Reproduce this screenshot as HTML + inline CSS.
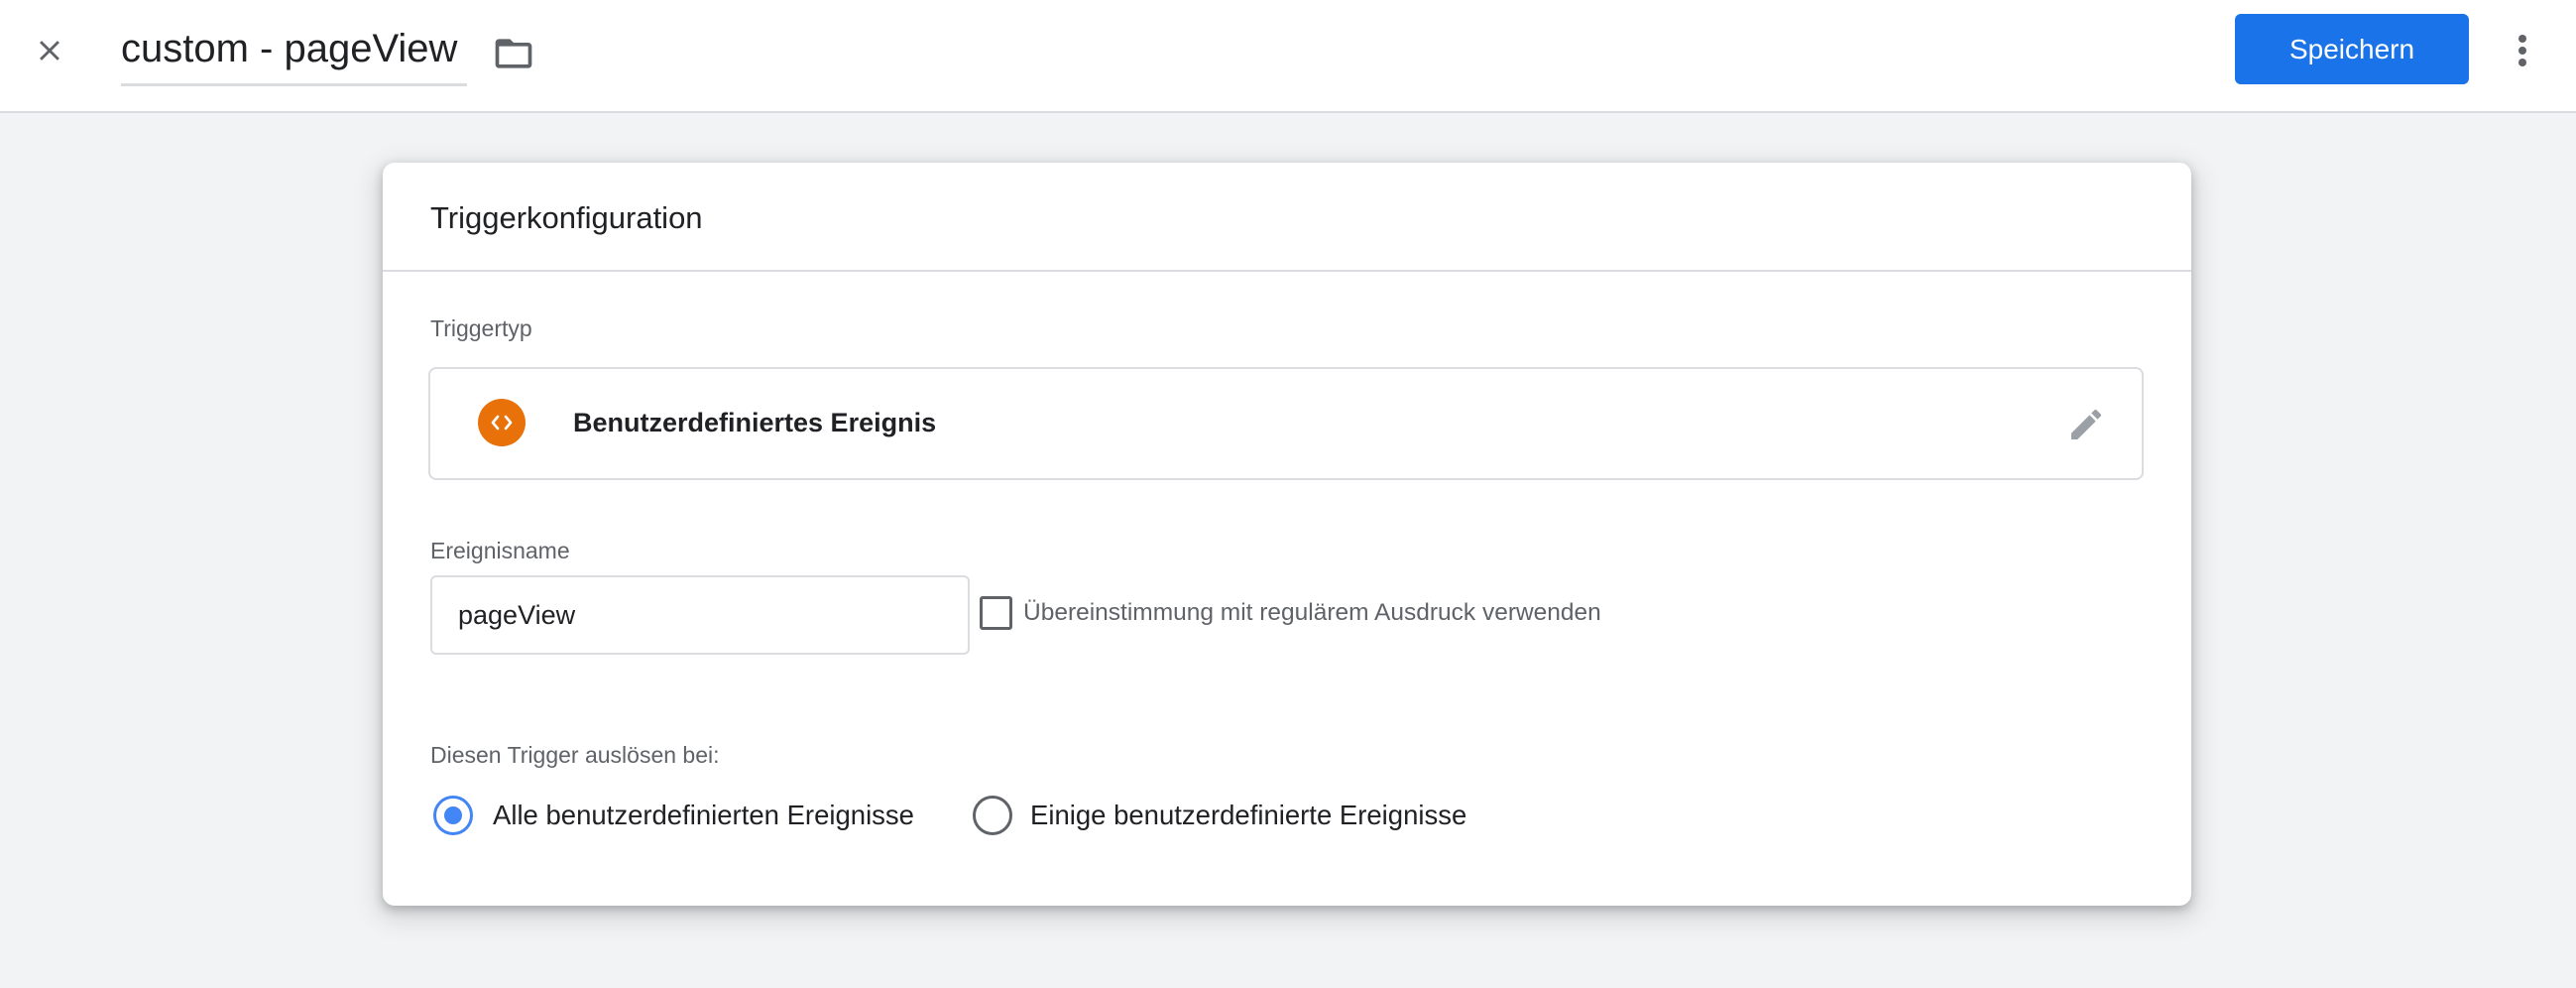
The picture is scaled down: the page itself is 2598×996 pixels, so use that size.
<!DOCTYPE html>
<html><head><meta charset="utf-8"><style>
*{box-sizing:border-box;margin:0;padding:0}
body{width:2598px;height:996px;background:#f1f3f4;font-family:"Liberation Sans",Arial,sans-serif;color:#202124;position:relative;overflow:hidden}
.hdr{position:absolute;left:0;top:0;width:2598px;height:114px;background:#fff;border-bottom:2px solid #dadce0}
.abs{position:absolute}
.card{position:absolute;left:386px;top:164px;width:1824px;height:749px;background:#fff;border-radius:12px;box-shadow:0 4px 10px rgba(60,64,67,.3),0 8px 24px 6px rgba(60,64,67,.15)}
</style></head><body>
<div class="hdr">
 <svg class="abs" style="left:33px;top:34px" width="34" height="34" viewBox="0 0 24 24"><path d="M19 6.41 17.59 5 12 10.59 6.41 5 5 6.41 10.59 12 5 17.59 6.41 19 12 13.41 17.59 19 19 17.59 13.41 12z" fill="#5f6368"/></svg>
 <div class="abs" style="left:122px;top:24px;font-size:40px;color:#202124;line-height:50px">custom - pageView</div>
 <div class="abs" style="left:122px;top:84px;width:349px;height:3px;background:#dadce0"></div>
 <svg class="abs" style="left:496px;top:32px" width="44" height="44" viewBox="0 0 24 24"><path d="M20 6h-8l-2-2H4c-1.1 0-2 .9-2 2v12c0 1.1.9 2 2 2h16c1.1 0 2-.9 2-2V8c0-1.1-.9-2-2-2zm0 12H4V8h16v10z" fill="#5f6368"/></svg>
 <div class="abs" style="left:2254px;top:14px;width:236px;height:71px;background:#1a73e8;border-radius:6px;color:#fff;font-size:28px;line-height:71px;text-align:center;font-weight:500">Speichern</div>
 <div class="abs" style="left:2540px;top:35px;width:8px;height:8px;border-radius:50%;background:#5f6368;box-shadow:0 12px 0 #5f6368,0 24px 0 #5f6368"></div>
</div>
<div class="card">
 <div class="abs" style="left:48px;top:36px;font-size:31px;line-height:40px">Triggerkonfiguration</div>
 <div class="abs" style="left:0;top:108px;width:1824px;height:2px;background:#dadce0"></div>
 <div class="abs" style="left:48px;top:154px;font-size:23px;color:#5f6368">Triggertyp</div>
 <div class="abs" style="left:46px;top:206px;width:1730px;height:114px;border:2px solid #dadce0;border-radius:8px">
  <div class="abs" style="left:48px;top:30px;width:48px;height:48px;border-radius:50%;background:#e8710a">
   <svg width="48" height="48" viewBox="0 0 48 48"><path d="M20 18 L15 24 L20 30 M28 18 L33 24 L28 30" stroke="#fff" stroke-width="2.6" fill="none" stroke-linecap="round" stroke-linejoin="round"/></svg>
  </div>
  <div class="abs" style="left:144px;top:38px;font-size:27px;font-weight:bold;line-height:32px">Benutzerdefiniertes Ereignis</div>
  <svg class="abs" style="left:1650px;top:36px" width="40" height="40" viewBox="0 0 24 24"><path d="M3 17.25V21h3.75L17.81 9.94l-3.75-3.75L3 17.25zM20.71 7.04a1 1 0 0 0 0-1.41l-2.34-2.34a1 1 0 0 0-1.41 0l-1.83 1.83 3.750 3.75 1.83-1.83z" fill="#9aa0a6"/></svg>
 </div>
 <div class="abs" style="left:48px;top:378px;font-size:23px;color:#5f6368">Ereignisname</div>
 <div class="abs" style="left:48px;top:416px;width:544px;height:80px;border:2px solid #dadce0;border-radius:6px;font-size:27px;line-height:76px;padding-left:26px">pageView</div>
 <div class="abs" style="left:602px;top:437px;width:33px;height:34px;border:3px solid #5f6368;border-radius:3px"></div>
 <div class="abs" style="left:646px;top:439px;font-size:24.5px;color:#5f6368;line-height:30px">Übereinstimmung mit regulärem Ausdruck verwenden</div>
 <div class="abs" style="left:48px;top:584px;font-size:23px;color:#5f6368">Diesen Trigger auslösen bei:</div>
 <div class="abs" style="left:51px;top:638px;width:40px;height:40px;border:3px solid #4285f4;border-radius:50%"><div style="position:absolute;left:8px;top:8px;width:18px;height:18px;border-radius:50%;background:#4285f4"></div></div>
 <div class="abs" style="left:111px;top:642px;font-size:27.5px;line-height:32px">Alle benutzerdefinierten Ereignisse</div>
 <div class="abs" style="left:595px;top:638px;width:40px;height:40px;border:3px solid #5f6368;border-radius:50%"></div>
 <div class="abs" style="left:653px;top:642px;font-size:27.5px;line-height:32px">Einige benutzerdefinierte Ereignisse</div>
</div>
</body></html>
